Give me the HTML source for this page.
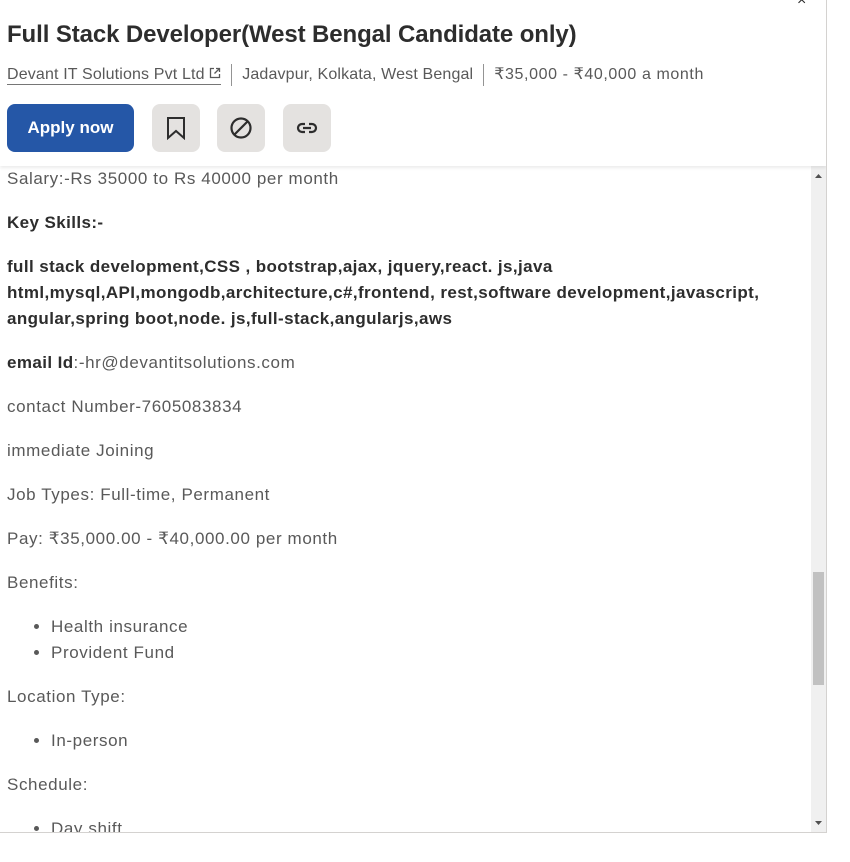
<!DOCTYPE html>
<html><head><meta charset="utf-8"><style>
*{box-sizing:border-box;margin:0;padding:0}
body{width:850px;height:862px;background:#fff;font-family:"Liberation Sans",sans-serif;color:#2d2d2d;overflow:hidden;position:relative}
.panel{position:absolute;left:0;top:0;width:827px;height:833px;border-right:1px solid #d4d2d0;border-bottom:1px solid #d4d2d0;overflow:hidden}
.head{position:absolute;left:0;top:0;width:826px;height:166px;background:#fff;box-shadow:0 2px 3px rgba(0,0,0,.08);z-index:2}
h1{position:absolute;left:7px;top:21px;font-size:24px;font-weight:bold;color:#2d2d2d;letter-spacing:-0.1px}
.meta{position:absolute;left:7px;top:64px;font-size:16px;color:#595959;white-space:nowrap;letter-spacing:0.15px}
.meta a{color:#595959;text-decoration:none;border-bottom:1px solid #767676;padding-bottom:1px}
.sep{display:inline-block;width:1px;height:22px;background:#949494;vertical-align:middle;margin:0 10px}
.sal{letter-spacing:0.6px}
.btn{position:absolute;top:104px;height:48px;border-radius:8px}
.apply{left:7px;width:127px;background:#2557a7;color:#fff;font-weight:bold;font-size:17px;text-align:center;line-height:48px}
.ib{width:48px;background:#e4e2e0;display:flex;align-items:center;justify-content:center}
.close{position:absolute;left:797px;top:-8px;font-size:16px;color:#2d2d2d}
.body{position:absolute;left:7px;top:166px;width:800px;font-size:17px;line-height:26px;color:#595959;letter-spacing:0.6px}
.body p{margin-bottom:18px}
.body b{color:#2d2d2d;letter-spacing:0.4px}
.body ul{margin:0 0 18px 44px}
.body li{line-height:26px}
.sb{position:absolute;left:811px;top:166px;width:15px;height:667px;background:#f0f0f0;z-index:1}
.thumb{position:absolute;left:2px;top:406px;width:11px;height:113px;background:#c1c1c1}
</style></head><body>
<div class="panel">
<div class="head">
<div class="close">×</div>
<h1>Full Stack Developer(West Bengal Candidate only)</h1>
<div class="meta"><a>Devant IT Solutions Pvt Ltd <svg width="12" height="12" viewBox="0 0 12 12" style="vertical-align:0"><path d="M5 1.5H1.5v9h9V7M7 1.5h3.5V5M10.5 1.5L5.5 6.5" fill="none" stroke="#595959" stroke-width="1.3"/></svg></a><span class="sep"></span>Jadavpur, Kolkata, West Bengal<span class="sep"></span><span class="sal">₹35,000 - ₹40,000 a month</span></div>
<div class="btn apply">Apply now</div>
<div class="btn ib" style="left:152px"><svg width="20" height="24" viewBox="0 0 20 24"><path d="M2 2h16v20l-8-7-8 7z" fill="none" stroke="#2d2d2d" stroke-width="2"/></svg></div>
<div class="btn ib" style="left:217px"><svg width="24" height="24" viewBox="0 0 24 24"><circle cx="12" cy="12" r="9.5" fill="none" stroke="#2d2d2d" stroke-width="2.2"/><path d="M5.5 18.5L18.5 5.5" stroke="#2d2d2d" stroke-width="2.2"/></svg></div>
<div class="btn ib" style="left:283px"><svg width="24" height="24" viewBox="0 0 24 24"><path d="M10 8H7a4 4 0 0 0 0 8h3M14 8h3a4 4 0 0 1 0 8h-3M8 12h8" fill="none" stroke="#2d2d2d" stroke-width="2.2"/></svg></div>
</div>
<div class="body">
<p>Salary:-Rs 35000 to Rs 40000 per month</p>
<p><b>Key Skills:-</b></p>
<p><b>full stack development,CSS , bootstrap,ajax, jquery,react. js,java<br>html,mysql,API,mongodb,architecture,c#,frontend, rest,software development,javascript,<br>angular,spring boot,node. js,full-stack,angularjs,aws</b></p>
<p><b>email Id</b>:-hr@devantitsolutions.com</p>
<p>contact Number-7605083834</p>
<p>immediate Joining</p>
<p>Job Types: Full-time, Permanent</p>
<p>Pay: ₹35,000.00 - ₹40,000.00 per month</p>
<p>Benefits:</p>
<ul><li>Health insurance</li><li>Provident Fund</li></ul>
<p>Location Type:</p>
<ul><li>In-person</li></ul>
<p>Schedule:</p>
<ul><li>Day shift</li></ul>
</div>
<div class="sb"><div class="thumb"></div>
<svg style="position:absolute;left:4px;top:8px" width="7" height="4"><path d="M0 4L3.5 0 7 4z" fill="#505050"/></svg>
<svg style="position:absolute;left:4px;top:655px" width="7" height="4"><path d="M0 0L3.5 4 7 0z" fill="#505050"/></svg>
</div>
</div>
</body></html>
